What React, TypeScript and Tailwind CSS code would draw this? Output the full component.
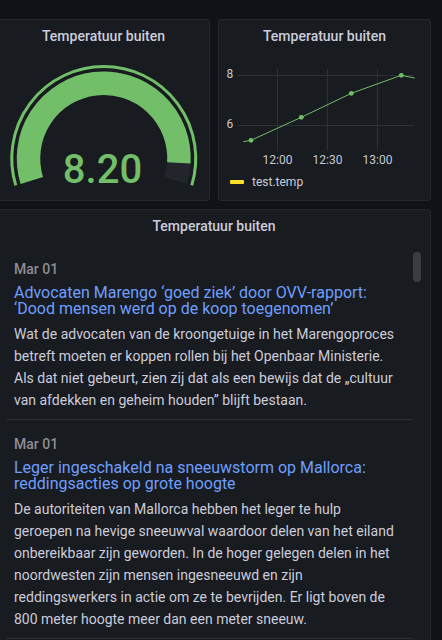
import React from "react";

const GREEN = "#73bf69";

function polar(cx: number, cy: number, r: number, deg: number) {
  // deg: screen angle in degrees, 0 = right, positive = clockwise (down)
  const a = (deg * Math.PI) / 180;
  return [cx + r * Math.cos(a), cy + r * Math.sin(a)];
}

function arcPath(cx: number, cy: number, r: number, startDeg: number, endDeg: number) {
  const [x1, y1] = polar(cx, cy, r, startDeg);
  const [x2, y2] = polar(cx, cy, r, endDeg);
  const large = endDeg - startDeg > 180 ? 1 : 0;
  return `M ${x1} ${y1} A ${r} ${r} 0 ${large} 1 ${x2} ${y2}`;
}

function Gauge() {
  const cx = 105.75;
  const cy = 106.5;
  const start = 163; // left, 17deg below horizontal
  const end = 377; // right, 17deg below horizontal
  const fillEnd = start + (end - start) * 0.936;
  return (
    <svg width="211" height="148" viewBox="0 0 211 148" className="block">
      <path d={arcPath(cx, cy, 92, start, end)} fill="none" stroke={GREEN} strokeWidth={3} />
      <path d={arcPath(cx, cy, 75.25, start, end)} fill="none" stroke="#22252b" strokeWidth={23.5} />
      <path d={arcPath(cx, cy, 75.25, start, fillEnd)} fill="none" stroke={GREEN} strokeWidth={23.5} />
      <text
        x={104.5}
        y={131}
        textAnchor="middle"
        fill={GREEN}
        fontSize={40}
        fontWeight={500}
        fontFamily="Roboto, sans-serif"
      >
        8.20
      </text>
    </svg>
  );
}

function Graph() {
  const pts: [number, number][] = [
    [32, 88.3],
    [82.3, 65.3],
    [132.3, 41.3],
    [182.3, 23.3],
  ];
  const line = [[24.3, 89.7], ...pts, [195.7, 26]] as [number, number][];
  return (
    <svg width="211" height="121" viewBox="0 0 211 121" className="block">
      <g stroke="#2e3035" strokeWidth={1}>
        <line x1={19} y1={23.5} x2={195} y2={23.5} />
        <line x1={19} y1={73.5} x2={195} y2={73.5} />
        <line x1={58.5} y1={17} x2={58.5} y2={99} />
        <line x1={108.5} y1={17} x2={108.5} y2={99} />
        <line x1={158.5} y1={17} x2={158.5} y2={99} />
      </g>
      <g fill="#c7c7d1" fontSize={12} fontFamily="Roboto, sans-serif">
        <text x={14.3} y={26.3} textAnchor="end">8</text>
        <text x={14.3} y={76} textAnchor="end">6</text>
        <text x={58.5} y={112.3} textAnchor="middle">12:00</text>
        <text x={108.5} y={112.3} textAnchor="middle">12:30</text>
        <text x={158.5} y={112.3} textAnchor="middle">13:00</text>
      </g>
      <polyline
        points={line.map((p) => p.join(",")).join(" ")}
        fill="none"
        stroke={GREEN}
        strokeWidth={1}
      />
      {pts.map((p, i) => (
        <circle key={i} cx={p[0]} cy={p[1]} r={2.4} fill={GREEN} />
      ))}
    </svg>
  );
}

function PanelTitle({ children }: { children: React.ReactNode }) {
  return (
    <div className="h-[32px] flex items-center justify-center text-[14px] leading-[16px] font-medium text-[#ccccdc] shrink-0">
      {children}
    </div>
  );
}

type Item = { title: string[]; body: string[] };

const items: Item[] = [
  {
    title: [
      "Advocaten Marengo \u2018goed ziek\u2019 door OVV-rapport:",
      "\u2018Dood mensen werd op de koop toegenomen\u2019",
    ],
    body: [
      "Wat de advocaten van de kroongetuige in het Marengoproces",
      "betreft moeten er koppen rollen bij het Openbaar Ministerie.",
      "Als dat niet gebeurt, zien zij dat als een bewijs dat de \u201ecultuur",
      "van afdekken en geheim houden\u201d blijft bestaan.",
    ],
  },
  {
    title: ["Leger ingeschakeld na sneeuwstorm op Mallorca:", "reddingsacties op grote hoogte"],
    body: [
      "De autoriteiten van Mallorca hebben het leger te hulp",
      "geroepen na hevige sneeuwval waardoor delen van het eiland",
      "onbereikbaar zijn geworden. In de hoger gelegen delen in het",
      "noordwesten zijn mensen ingesneeuwd en zijn",
      "reddingswerkers in actie om ze te bevrijden. Er ligt boven de",
      "800 meter hoogte meer dan een meter sneeuw.",
    ],
  },
];

export default function App() {
  const panel = "rounded-[3px] border border-[#25272c] bg-[#181b1f] flex flex-col overflow-hidden";
  return (
    <div className="w-[442px] h-[640px] overflow-hidden bg-[#111217] font-['Roboto',sans-serif]">
      <div className="ml-[-3px] w-[434px] pt-[19px] flex flex-col gap-[8px]">
        <div className="grid grid-cols-[213px_213px] gap-[8px] h-[182px]">
          <div className={panel}>
            <PanelTitle>Temperatuur buiten</PanelTitle>
            <Gauge />
          </div>
          <div className={panel}>
            <PanelTitle>Temperatuur buiten</PanelTitle>
            <Graph />
            <div className="flex items-center h-[18px] pl-[11px] gap-[8px]">
              <span className="block w-[14px] h-[4px] rounded-[1px] bg-[#fade2a]" />
              <span className="text-[12px] leading-[16px] text-[#ccccdc]">test.temp</span>
            </div>
          </div>
        </div>
        <div className={panel + " h-[460px]"}>
          <PanelTitle>Temperatuur buiten</PanelTitle>
          <div className="flex px-[8px]">
            <div className="w-[407px] pt-[3px]">
              {items.map((it, i) => (
                <div key={i} className="pt-[14px] pb-[8px] px-[8px] border-b border-[#2b2d32]">
                  <div className="text-[14px] leading-[20px] font-medium text-[#8d8d97] mb-[6px]">Mar 01</div>
                  <div className="text-[16px] leading-[16px] text-[#6e9fff] mb-[6px] whitespace-nowrap">
                    {it.title.map((t, j) => (
                      <div key={j}>{t}</div>
                    ))}
                  </div>
                  <div className="text-[14px] leading-[22px] text-[#ccccdc] whitespace-nowrap">
                    {it.body.map((t, j) => (
                      <div key={j}>{t}</div>
                    ))}
                  </div>
                </div>
              ))}
            </div>
            <div className="w-[9px] pt-[10px]">
              <div className="w-[8px] h-[30px] rounded-full bg-[#3b3d42]" />
            </div>
          </div>
        </div>
      </div>
    </div>
  );
}
